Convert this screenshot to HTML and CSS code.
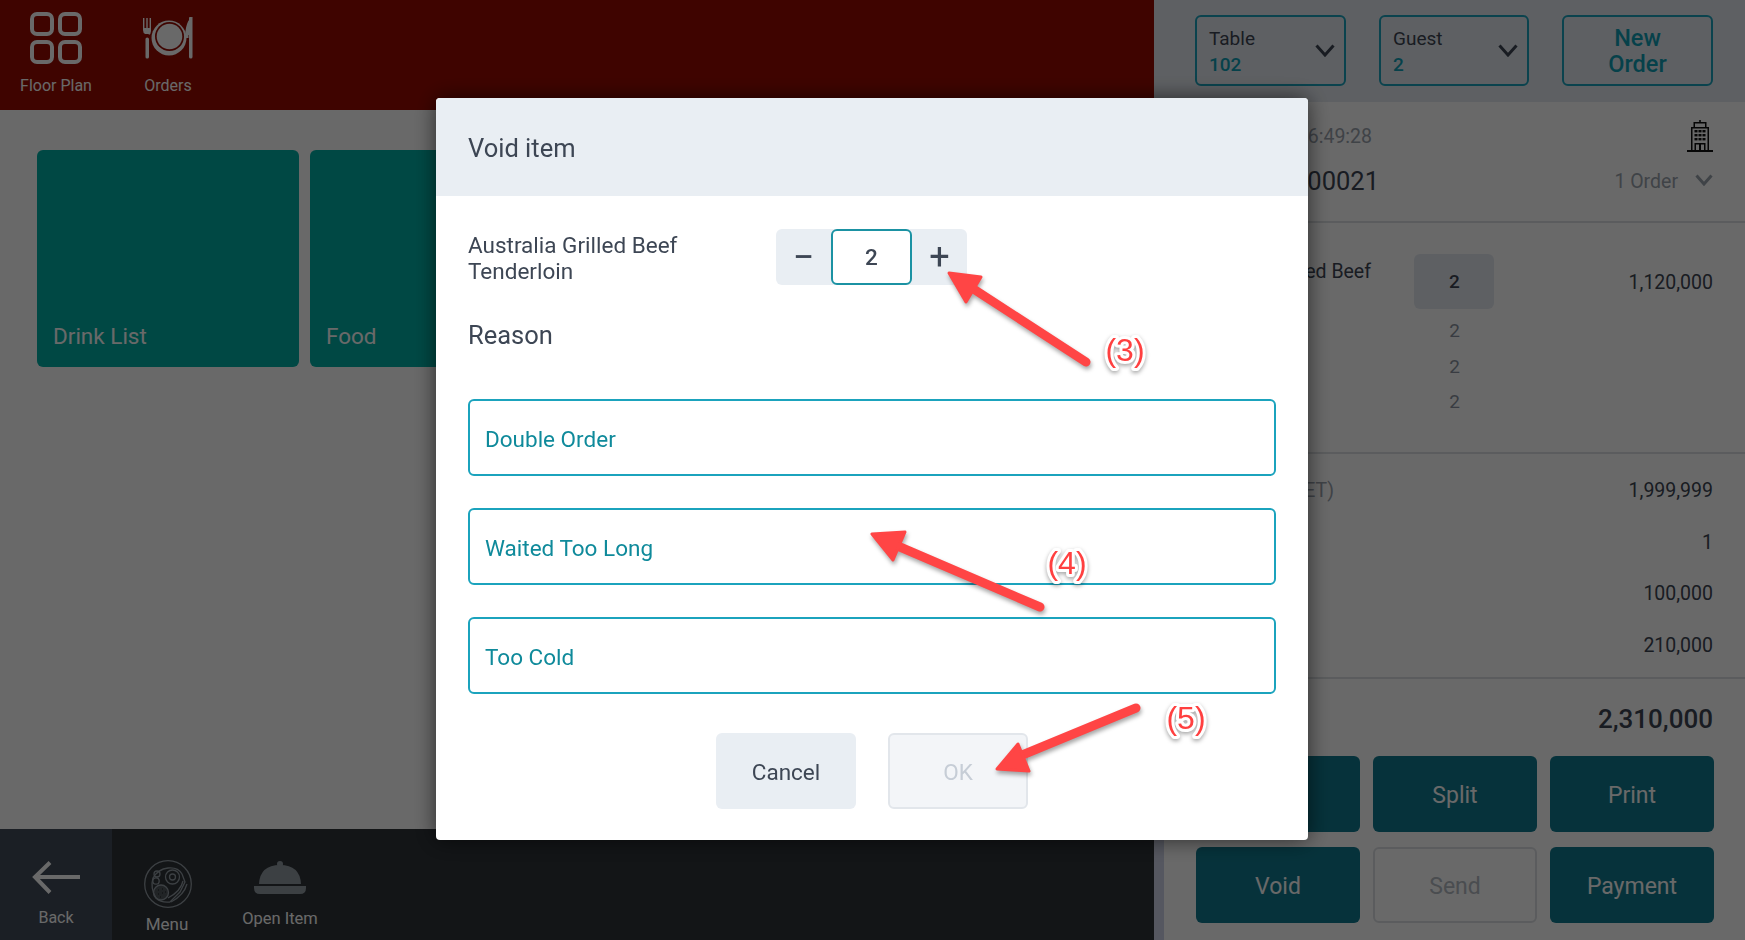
FILE: index.html
```html
<!DOCTYPE html>
<html lang="en">
<head>
    <meta charset="UTF-8">
    <title>Void item</title>
    <link rel="stylesheet" href="styles.css">
</head>
<body>
    <div class="main">
        <div class="top-nav">
            <div class="nav-item">
                <svg class="nav-icon" width="52" height="52" viewBox="0 0 52 52" fill="none" stroke="currentColor" stroke-width="4">
                    <rect x="2" y="2" width="20" height="20" rx="5"/>
                    <rect x="30" y="2" width="20" height="20" rx="5"/>
                    <rect x="2" y="30" width="20" height="20" rx="5"/>
                    <rect x="30" y="30" width="20" height="20" rx="5"/>
                </svg>
                <span>Floor Plan</span>
            </div>
            <div class="nav-item">
                <svg class="nav-icon" width="52" height="52" viewBox="0 0 52 52" fill="currentColor">
                    <circle cx="27" cy="26" r="17.500"/>
                    <circle cx="27.500" cy="24.500" r="14.500" fill="#9a0c00"/>
                    <circle cx="27.500" cy="24.500" r="12.800"/>
                    <path d="M1 6h1.400v10h1.900V6h1.400v10h1.900V6H9v13q0 3-2.200 4v-1H3.200q-2.200-1-2.200-4z"/>
                    <path d="M3.500 27q0-1.500 1.700-1.500T7 27v18q0 1.500-1.800 1.500T3.500 45z"/>
                    <path d="M50.500 5q-7 3-7.500 21h3.500v-3h1v-18z"/>
                    <path d="M47 5.500l3.500-.5v40q0 1.500-1.700 1.500T47 45z"/>
                </svg>
                <span>Orders</span>
            </div>
        </div>
        <div class="categories">
            <div class="tile">Drink List</div>
            <div class="tile">Food</div>
        </div>
        <div class="bottom-nav">
            <div class="bottom-item back">
                <svg width="48" height="34" viewBox="0 0 48 34" fill="none" stroke="currentColor" stroke-width="4">
                    <path d="M48 16H3M18 1.500L3 16l15 15.500"/>
                </svg>
                <span>Back</span>
            </div>
            <div class="bottom-item menu">
                <svg width="48" height="48" viewBox="0 0 48 48" fill="none" stroke="currentColor" stroke-width="1.300">
                    <circle cx="24" cy="24" r="23.300"/>
                    <path d="M9 18q5-9 15-10 10-1 14 6l3 8-5 10-10 10q-9 1-14-4-6-10-3-20z"/>
                    <circle cx="28.500" cy="17" r="7"/>
                    <circle cx="28.500" cy="17" r="3"/>
                    <circle cx="17" cy="32.500" r="7.500" fill="currentColor" fill-opacity=".35"/>
                    <path d="M14 30h1M18 29h1M14 34h1M18 33h1M21 32h1M16 37h1" stroke="#2e3338" stroke-width="1.500"/>
                    <circle cx="13" cy="14" r="3"/>
                    <circle cx="12" cy="21" r="3.200"/>
                    <path d="M43 24q-3 11-16 18M39 21q-2 10-15 17"/>
                </svg>
                <span>Menu</span>
            </div>
            <div class="bottom-item open-item">
                <svg width="52" height="34" viewBox="0 0 52 34" fill="currentColor">
                    <circle cx="26" cy="3" r="3"/>
                    <path d="M5 23q1-19 21-19t21 19z"/>
                    <path d="M0 25h52v2q0 6-6 6H6q-6 0-6-6z"/>
                </svg>
                <span>Open Item</span>
            </div>
        </div>
    </div>

    <div class="side">
        <div class="side-top">
            <div class="select">
                <div class="select-text">
                    <div class="select-label">Table</div>
                    <div class="select-value">102</div>
                </div>
                <svg class="chevron" width="20" height="13" viewBox="0 0 20 13" fill="none" stroke="currentColor" stroke-width="3">
                    <path d="M1.500 1.500L10 11l8.500-9.500"/>
                </svg>
            </div>
            <div class="select">
                <div class="select-text">
                    <div class="select-label">Guest</div>
                    <div class="select-value">2</div>
                </div>
                <svg class="chevron" width="20" height="13" viewBox="0 0 20 13" fill="none" stroke="currentColor" stroke-width="3">
                    <path d="M1.500 1.500L10 11l8.500-9.500"/>
                </svg>
            </div>
            <div class="select new-order">New<br>Order</div>
        </div>

        <div class="order-info">
            <div class="order-row">
                <span class="order-time">16:49:28</span>
                <svg class="building" width="26" height="32" viewBox="0 0 26 32" fill="#111">
                    <rect y="30" width="26" height="2"/>
                    <path d="M4 7h18v24h-1.500V8.500h-15V31H4z"/>
                    <path d="M6.500 2h13v5h-1.500V3.500H8V7H6.500z"/>
                    <rect x="12.200" width="1.600" height="2.500"/>
                    <rect x="7.500" y="10" width="3" height="2.400"/>
                    <rect x="11.500" y="10" width="3" height="2.400"/>
                    <rect x="15.500" y="10" width="3" height="2.400"/>
                    <rect x="7.500" y="14" width="3" height="2.400"/>
                    <rect x="11.500" y="14" width="3" height="2.400"/>
                    <rect x="15.500" y="14" width="3" height="2.400"/>
                    <rect x="7.500" y="18" width="3" height="2.400"/>
                    <rect x="11.500" y="18" width="3" height="2.400"/>
                    <rect x="15.500" y="18" width="3" height="2.400"/>
                    <path d="M7.500 23h11v8H17v-6.500h-3V31h-2v-6.500H9V31H7.500z"/>
                </svg>
            </div>
            <div class="order-row">
                <span class="order-no">00021</span>
                <span class="order-count">1 Order
                    <svg width="18" height="12" viewBox="0 0 18 12" fill="none" stroke="currentColor" stroke-width="3">
                        <path d="M1.500 1.500L9 10l7.500-8.500"/>
                    </svg>
                </span>
            </div>
        </div>

        <div class="items">
            <div class="item-row first">
                <span class="item-name"><span>Australia Grilled Beef</span></span>
                <span class="qty qty-active">2</span>
                <span class="amount">1,120,000</span>
            </div>
            <div class="item-row"><span></span><span class="qty">2</span><span></span></div>
            <div class="item-row"><span></span><span class="qty">2</span><span></span></div>
            <div class="item-row"><span></span><span class="qty">2</span><span></span></div>
        </div>

        <div class="totals">
            <div class="total-row"><span class="vat-label">(NET)</span><span class="amount">1,999,999</span></div>
            <div class="total-row"><span></span><span class="amount">1</span></div>
            <div class="total-row"><span></span><span class="amount">100,000</span></div>
            <div class="total-row"><span></span><span class="amount">210,000</span></div>
        </div>

        <div class="grand-total">2,310,000</div>

        <div class="actions">
            <div class="action"></div>
            <div class="action">Split</div>
            <div class="action">Print</div>
            <div class="action">Void</div>
            <div class="action disabled">Send</div>
            <div class="action">Payment</div>
        </div>
    </div>

    <div class="overlay">
        <div class="modal">
            <div class="modal-title">Void item</div>
            <div class="modal-body">
                <div class="void-row">
                    <div class="void-name">Australia Grilled Beef Tenderloin</div>
                    <div class="stepper">
                        <span class="step">−</span>
                        <span class="step-value">2</span>
                        <span class="step plus">+</span>
                    </div>
                </div>
                <div class="reason-title">Reason</div>
                <div class="reasons">
                    <div class="reason">Double Order</div>
                    <div class="reason">Waited Too Long</div>
                    <div class="reason">Too Cold</div>
                </div>
                <div class="modal-actions">
                    <div class="modal-btn">Cancel</div>
                    <div class="modal-btn ok">OK</div>
                </div>
            </div>
        </div>

        <!-- red callouts drawn on top of the screenshot -->
        <svg class="callouts" width="1745" height="940" viewBox="0 0 1745 940">
            <g class="callout-arrows">
                <path d="M1086 362L972 288"/>
                <polygon points="949,273 981,277 966,302"/>
                <path d="M1040 607L893 544"/>
                <polygon points="872,534 905,532 893,560"/>
                <path d="M1136 708L1015 758"/>
                <polygon points="997,769 1018,744 1029,771"/>
            </g>
            <text class="callout-text" x="1125" y="361">(3)</text>
            <text class="callout-text" x="1067" y="574">(4)</text>
            <text class="callout-text" x="1186" y="729">(5)</text>
        </svg>
    </div>
</body>
</html>
```

FILE: styles.css
```css
* {
    box-sizing: border-box;
}

html, body {
    height: 100%;
    overflow: hidden;
}

body {
    margin: 0;
    display: flex;
    font-family: Roboto, "Liberation Sans", sans-serif;
    color: #3d4654;
    background: #fff;
}

.main {
    width: 1154px;
    display: flex;
    flex-direction: column;
}

.top-nav {
    height: 110px;
    display: flex;
    background: #9a0c00;
    color: #fff;
}

.nav-item {
    width: 112px;
    padding-top: 12px;
    display: flex;
    flex-direction: column;
    align-items: center;
    font-size: 16px;
    gap: 12px;
}

.categories {
    flex: 1;
    display: flex;
    gap: 11px;
    padding: 40px 0 0 37px;
    background: #fff;
}

.tile {
    width: 262px;
    height: 217px;
    padding: 0 16px 18px;
    display: flex;
    align-items: flex-end;
    border-radius: 6px;
    background: #00b0a6;
    color: #fff;
    font-size: 22.500px;
}

.bottom-nav {
    height: 111px;
    display: flex;
    background: #2e3338;
    color: #fff;
}

.bottom-item {
    width: 112px;
    display: flex;
    flex-direction: column;
    align-items: center;
    font-size: 16px;
}

.bottom-item.back {
    padding-top: 32px;
    gap: 13px;
    background: #424c5a;
}

.bottom-item.menu {
    padding-top: 31px;
    padding-right: 2px;
    gap: 6px;
    font-size: 17px;
}

.bottom-item.menu svg {
    color: #939ca4;
    margin-left: 2px;
}

.bottom-item.open-item {
    padding-top: 32px;
    gap: 14px;
    font-size: 16.500px;
}

.bottom-item.open-item svg {
    color: #939ca4;
}

.side {
    flex: 1;
    position: relative;
    display: flex;
    flex-direction: column;
}

/* lighter edge along the panel, only shows below the dialog */
.side::after {
    content: "";
    position: absolute;
    left: 0;
    bottom: 0;
    width: 10px;
    height: 140px;
    background: #cfd4e8;
}

.side-top {
    height: 102px;
    padding: 15px 32px 0 41px;
    display: grid;
    grid-template-columns: 151px 150px 151px;
    gap: 33px;
    background: #e5eaf1;
}

.select {
    height: 71px;
    padding: 0 12px;
    display: flex;
    align-items: center;
    justify-content: space-between;
    border: 2px solid #1ba3bd;
    border-radius: 6px;
    font-size: 19px;
}

.select-text {
    padding-top: 2px;
}

.select-label {
    line-height: 26px;
}

.select-value {
    line-height: 26px;
    color: #109eb5;
    font-weight: 500;
}

.chevron {
    color: #3d4654;
    margin-right: -3px;
}

.new-order {
    justify-content: center;
    text-align: center;
    font-size: 23.500px;
    line-height: 26px;
    font-weight: 500;
    color: #109eb5;
}

.order-info {
    height: 121px;
    padding: 18px 32px 0 41px;
    border-bottom: 2px solid #dde0e4;
}

.order-row {
    display: flex;
    align-items: center;
    justify-content: space-between;
}

.order-row:first-child {
    height: 32px;
}

.order-row:last-child {
    margin-top: 14px;
}

.order-time {
    width: 177px;
    text-align: right;
    font-size: 19.500px;
    color: #9aa2ad;
}

.order-no {
    width: 184px;
    text-align: right;
    font-size: 25.500px;
}

.order-count {
    display: flex;
    align-items: center;
    gap: 17px;
    font-size: 19.500px;
    color: #9aa2ad;
}

.order-count svg {
    margin-top: -3px;
}

.items {
    height: 231px;
    padding: 31px 32px 0 41px;
    border-bottom: 2px solid #dde0e4;
}

.item-row {
    height: 35.500px;
    display: grid;
    grid-template-columns: 219px 80px 1fr;
    align-items: center;
}

.item-row.first {
    height: 59px;
    align-items: flex-start;
}

.item-name {
    width: 176px;
    display: flex;
    justify-content: flex-end;
    white-space: nowrap;
    font-size: 19.500px;
    line-height: 36px;
}

.qty {
    padding-left: 1px;
    text-align: center;
    font-size: 19px;
    color: #8b93a0;
}

.qty-active {
    height: 55px;
    line-height: 56px;
    border-radius: 6px;
    background: #e5eaf1;
    color: #3d4654;
    font-weight: 500;
}

.amount {
    text-align: right;
    font-size: 19.500px;
}

.item-row .amount {
    line-height: 57px;
}

.totals {
    height: 225px;
    padding: 11px 32px 0 41px;
    border-bottom: 2px solid #dde0e4;
}

.total-row {
    height: 51.500px;
    display: flex;
    align-items: center;
    justify-content: space-between;
}

.vat-label {
    width: 139px;
    text-align: right;
    font-size: 19.500px;
    color: #9aa2ad;
}

.grand-total {
    height: 77px;
    padding: 25px 32px 0 41px;
    text-align: right;
    font-size: 26px;
    font-weight: 500;
}

.actions {
    padding: 0 31px 0 42px;
    display: grid;
    grid-template-columns: repeat(3, 164px);
    grid-auto-rows: 76px;
    column-gap: 13px;
    row-gap: 15px;
}

.action {
    padding-top: 2px;
    display: flex;
    align-items: center;
    justify-content: center;
    border-radius: 6px;
    background: #0f7a8f;
    color: #fff;
    font-size: 23px;
}

.action.disabled {
    background: transparent;
    border: 2px solid #dde0e4;
    color: #b4bac3;
}

.overlay {
    position: fixed;
    inset: 0;
    z-index: 1;
    padding: 0 1px 2px 0;
    display: flex;
    align-items: center;
    justify-content: center;
    background: rgba(0, 0, 0, 0.59);
}

.modal {
    width: 872px;
    height: 742px;
    border-radius: 4px;
    overflow: hidden;
    background: #fff;
    box-shadow: 0 0 22px rgba(0, 0, 0, 0.6);
}

.modal-title {
    height: 98px;
    padding: 2px 0 0 32px;
    display: flex;
    align-items: center;
    background: #e9eef3;
    font-size: 25.500px;
}

.modal-body {
    padding: 33px 32px 0;
}

.void-row {
    display: flex;
}

.void-name {
    width: 308px;
    padding: 3px 60px 0 0;
    font-size: 22.500px;
    line-height: 26px;
}

.stepper {
    width: 191px;
    height: 56px;
    display: flex;
    align-items: center;
    border-radius: 6px;
    background: #e9eef3;
}

.step {
    width: 55px;
    text-align: center;
    font-size: 38px;
    font-weight: 400;
    line-height: 52px;
}

.step.plus {
    font-size: 36px;
}

.step-value {
    width: 81px;
    height: 56px;
    line-height: 52px;
    text-align: center;
    border: 2px solid #1b92a3;
    border-radius: 6px;
    background: #fff;
    font-size: 22.500px;
    font-weight: 500;
}

.reason-title {
    margin-top: 34px;
    font-size: 25.500px;
    line-height: 32px;
}

.reasons {
    margin-top: 48px;
    display: flex;
    flex-direction: column;
    gap: 32px;
}

.reason {
    height: 77px;
    padding: 2px 0 0 15px;
    display: flex;
    align-items: center;
    border: 2px solid #1ba3bd;
    border-radius: 6px;
    color: #0f8a9b;
    font-size: 22.500px;
}

.modal-actions {
    margin-top: 39px;
    display: flex;
    justify-content: center;
    gap: 32px;
}

.modal-btn {
    width: 140px;
    height: 76px;
    padding-top: 2px;
    display: flex;
    align-items: center;
    justify-content: center;
    border-radius: 6px;
    background: #e9eef3;
    font-size: 22.500px;
}

.modal-btn.ok {
    background: #f3f5f8;
    border: 2px solid #e2e6eb;
    color: #c6cdd6;
}

.callouts {
    position: absolute;
    left: 0;
    top: 0;
}

.callout-arrows {
    fill: #ff4545;
    stroke: #ff4545;
    stroke-width: 3;
    stroke-linejoin: round;
    filter: drop-shadow(1px 3px 2px rgba(0, 0, 0, 0.35));
}

.callout-arrows path {
    fill: none;
    stroke-width: 9;
    stroke-linecap: round;
}

.callout-text {
    font-family: "Liberation Sans", sans-serif;
    font-size: 32px;
    text-anchor: middle;
    fill: #ff4040;
    stroke: #fff;
    stroke-width: 6px;
    stroke-linejoin: round;
    paint-order: stroke;
    filter: drop-shadow(0 2px 2px rgba(0, 0, 0, 0.35));
}
```
